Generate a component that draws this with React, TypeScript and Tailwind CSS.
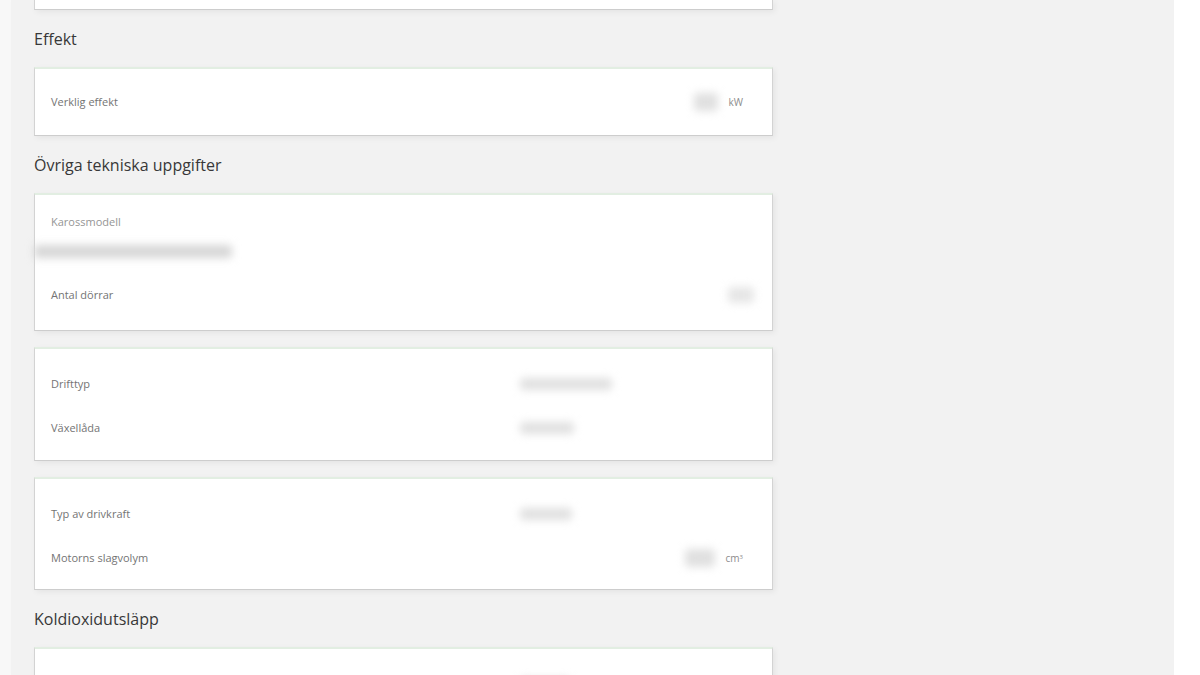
import React from 'react'

const font = { fontFamily: '"Open Sans", "Noto Sans", "Liberation Sans", sans-serif' }

// Blurred placeholder for redacted values
function Redacted({ className = '' }: { className?: string }) {
  return <div className={`h-[12px] rounded-sm bg-[#d6d6d6] blur-[4px] ${className}`} />
}

function Card({ children, className = '' }: { children: React.ReactNode; className?: string }) {
  return (
    <div
      className={`w-[739px] bg-white border-t-2 border-t-[#e2eee2] border-x border-x-[#d3d3d3] border-b border-b-[#cdcdcd] shadow-[2px_2px_6px_rgba(0,0,0,0.06)] px-4 ${className}`}
    >
      {children}
    </div>
  )
}

function Heading({ children }: { children: React.ReactNode }) {
  return <h2 className="h-[24px] leading-[24px] mt-[17px] mb-[16px] text-[16px] text-[#383838]">{children}</h2>
}

function Row({ label, value, h = 'h-[44px]' }: { label: string; value?: React.ReactNode; h?: string }) {
  return (
    <div className={`grid grid-cols-[469px_1fr] items-center ${h}`}>
      <span className="text-[11px] text-[#747474]">{label}</span>
      <div className="flex items-center">{value}</div>
    </div>
  )
}

function UnitValue({ blurW, unit }: { blurW: string; unit: React.ReactNode }) {
  return (
    <div className="flex items-center justify-end w-full pr-[13px]">
      <Redacted className={`${blurW} h-[18px] bg-[#e0e0e0]`} />
      <span className="ml-[11px] text-[10px] text-[#8c8c8c]">{unit}</span>
    </div>
  )
}

export default function App() {
  return (
    <div className="w-[1200px] h-[675px] overflow-hidden flex bg-white" style={font}>
      <div className="w-[11px] shrink-0 bg-[#f8f8f8]" />
      <main className="w-[1163px] shrink-0 bg-[#f2f2f2] pl-[23px] shadow-[2px_0_4px_rgba(0,0,0,0.04)]">
        {/* tail of the previous card */}
        <div className="w-[739px] h-[10px] bg-white border-x border-x-[#d3d3d3] border-b border-b-[#cdcdcd] shadow-[2px_2px_6px_rgba(0,0,0,0.06)]" />

        <Heading>Effekt</Heading>
        <Card>
          <Row label="Verklig effekt" h="h-[66px]" value={<UnitValue blurW="w-[24px]" unit="kW" />} />
        </Card>

        <Heading>Övriga tekniska uppgifter</Heading>
        <Card className="pt-[13px] pb-[13px]">
          <div className="h-[28px] flex items-center text-[11px] text-[#959595]">Karossmodell</div>
          <Redacted className="mt-[9px] -ml-[17px] w-[198px] h-[13px] bg-[#d4d4d4]" />
          <div className="mt-[15px] h-[44px] flex items-center justify-between">
            <span className="text-[11px] text-[#747474]">Antal dörrar</span>
            <Redacted className="w-[26px] h-[16px] bg-[#e6e6e6] mr-[2px]" />
          </div>
        </Card>

        <Card className="mt-4 pt-[13px] pb-[10px]">
          <Row label="Drifttyp" value={<Redacted className="w-[92px] bg-[#e0e0e0]" />} />
          <Row label="Växellåda" value={<Redacted className="w-[54px] bg-[#e0e0e0]" />} />
        </Card>

        <Card className="mt-4 pt-[13px] pb-[9px]">
          <Row label="Typ av drivkraft" value={<Redacted className="w-[52px] bg-[#e0e0e0]" />} />
          <Row label="Motorns slagvolym" value={<UnitValue blurW="w-[30px]" unit={<>cm<sup className="text-[6px]">3</sup></>} />} />
        </Card>

        <Heading>Koldioxidutsläpp</Heading>
        <Card className="pt-[13px] pb-[10px]">
          <Row label="" value={<Redacted className="w-[50px] bg-[#e0e0e0]" />} />
        </Card>
      </main>
      <div className="flex-1 bg-white" />
    </div>
  )
}
